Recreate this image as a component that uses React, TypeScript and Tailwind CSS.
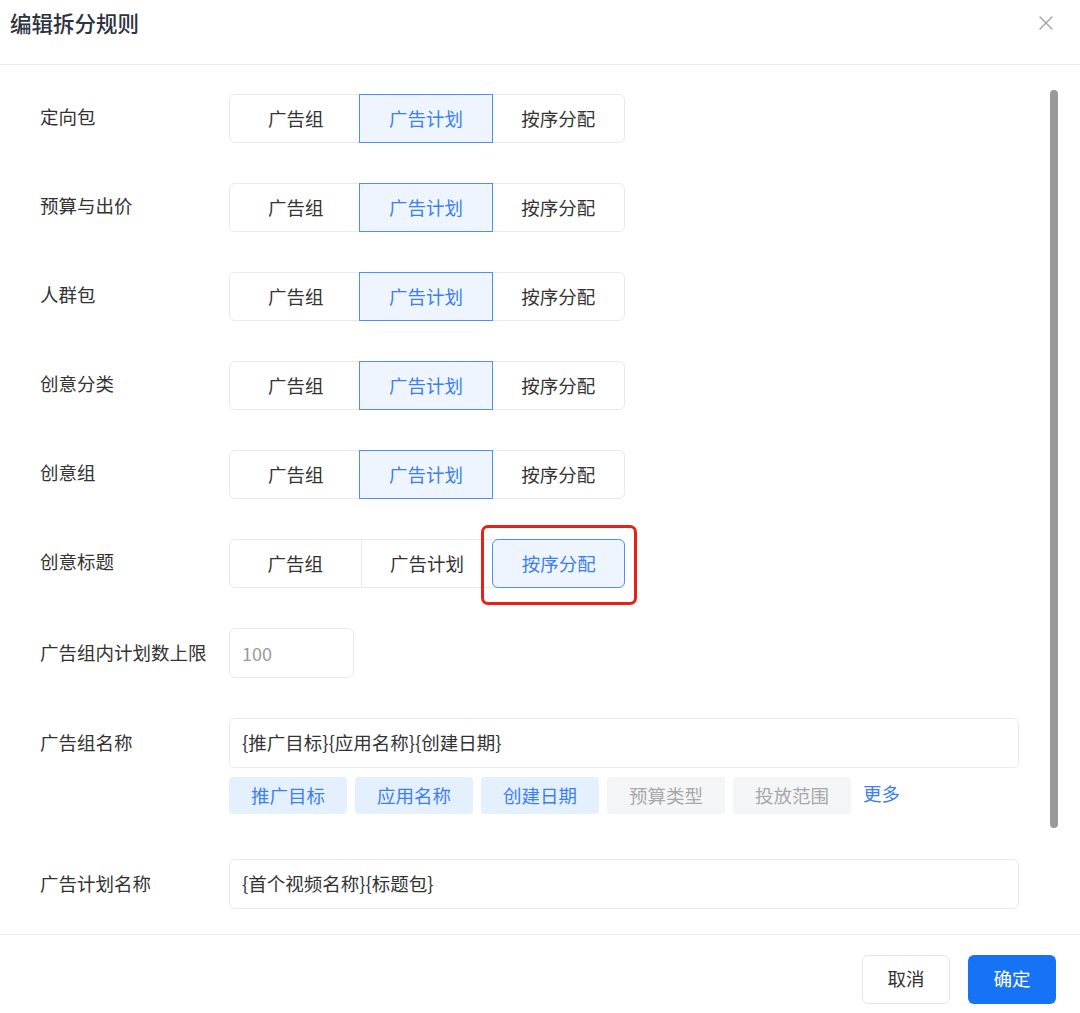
import { X } from 'lucide-react';

const rules = [
  { label: '定向包', value: 1 },
  { label: '预算与出价', value: 1 },
  { label: '人群包', value: 1 },
  { label: '创意分类', value: 1 },
  { label: '创意组', value: 1 },
  { label: '创意标题', value: 2, marked: true },
];

const options = ['广告组', '广告计划', '按序分配'];

const tags = [
  { text: '推广目标', on: true },
  { text: '应用名称', on: true },
  { text: '创建日期', on: true },
  { text: '预算类型', on: false },
  { text: '投放范围', on: false },
];

function Segmented({ value, marked }: { value: number; marked?: boolean }) {
  return (
    <div className="relative flex h-[49px] w-[396px] rounded-[6px] border border-[#e8eaee]">
      {options.map((opt, i) => {
        const active = i === value;
        const rounded = marked && active;
        return (
          <div
            key={opt}
            className={
              'flex flex-1 items-center justify-center text-[18.5px] ' +
              (active
                ? 'relative z-10 -my-px border-[1.5px] border-[#4f8ef5] bg-[#eef5ff] text-[#3d7ff0] ' +
                  (rounded ? '-mr-px rounded-[6px]' : '-ml-[2px]')
                : 'text-[#333] ' + (i > 0 && i - 1 !== value ? 'border-l border-[#e8eaee]' : ''))
            }
          >
            {opt}
          </div>
        );
      })}
      {marked && (
        <div className="pointer-events-none absolute left-[251px] top-[-15px] h-[80px] w-[156px] rounded-[7px] border-[3px] border-[#e8201a]" />
      )}
    </div>
  );
}

export default function App() {
  return (
    <div
      className="flex h-[1013px] w-[1080px] flex-col bg-white text-[#333]"
      style={{ fontFamily: '"Noto Sans CJK SC", "Noto Sans", sans-serif' }}
    >
      {/* Header */}
      <div className="flex h-[65px] shrink-0 items-center justify-between border-b border-[#ececec] pl-[10px] pr-[22px]">
        <span className="mt-[-18px] text-[21.5px] font-medium text-[#2d3340]">编辑拆分规则</span>
        <X className="mt-[-18px] h-[24px] w-[24px] text-[#a0a0a0]" strokeWidth={1.3} />
      </div>

      {/* Body */}
      <div className="relative flex-1 overflow-hidden">
        <div className="flex flex-col gap-[40px] pl-[40px] pt-[29px]">
          {rules.map((r) => (
            <div key={r.label} className="flex items-start">
              <div className="flex h-[46px] w-[189px] items-center text-[18.5px] text-[#333]">{r.label}</div>
              <Segmented value={r.value} marked={r.marked} />
            </div>
          ))}

          <div className="flex items-start">
            <div className="flex h-[50px] w-[189px] items-center text-[18.5px]">广告组内计划数上限</div>
            <div className="flex h-[50px] w-[125px] items-center rounded-[6px] border border-[#e8eaee] px-[12px] text-[18px] text-[#9a9a9a]">
              100
            </div>
          </div>

          <div className="flex items-start">
            <div className="flex h-[50px] w-[189px] items-center text-[18.5px]">广告组名称</div>
            <div className="flex flex-col">
              <div className="flex h-[50px] w-[790px] items-center rounded-[6px] border border-[#e8eaee] px-[12px] text-[18.5px] text-[#333]">
                {'{推广目标}{应用名称}{创建日期}'}
              </div>
              <div className="mt-[9px] flex items-center gap-[8px]">
                {tags.map((t) => (
                  <div
                    key={t.text}
                    className={
                      'flex h-[37px] w-[118px] items-center justify-center rounded-[4px] text-[18.5px] ' +
                      (t.on ? 'bg-[#e5f0ff] text-[#3d7ff0]' : 'bg-[#f4f5f6] text-[#a8a8a8]')
                    }
                  >
                    {t.text}
                  </div>
                ))}
                <span className="ml-[4px] mt-[-4px] text-[18.5px] text-[#3d7ff0]">更多</span>
              </div>
            </div>
          </div>

          <div className="mt-[5px] flex items-start">
            <div className="flex h-[50px] w-[189px] items-center text-[18.5px]">广告计划名称</div>
            <div className="flex h-[50px] w-[790px] items-center rounded-[6px] border border-[#e8eaee] px-[12px] text-[18.5px] text-[#333]">
              {'{首个视频名称}{标题包}'}
            </div>
          </div>
        </div>

        {/* scrollbar */}
        <div className="absolute right-[22px] top-[25px] h-[738px] w-[8px] rounded-full bg-[#9a9a9a]" />
      </div>

      {/* Footer */}
      <div className="flex h-[79px] shrink-0 items-center justify-end gap-[18px] border-t border-[#ececec] pr-[24px] pt-[10px]">
        <button className="h-[49px] w-[88px] rounded-[6px] border border-[#e6e6e6] bg-white text-[18.5px] text-[#333]">
          取消
        </button>
        <button className="h-[49px] w-[88px] rounded-[6px] bg-[#1673f5] text-[18.5px] text-white">确定</button>
      </div>
    </div>
  );
}
